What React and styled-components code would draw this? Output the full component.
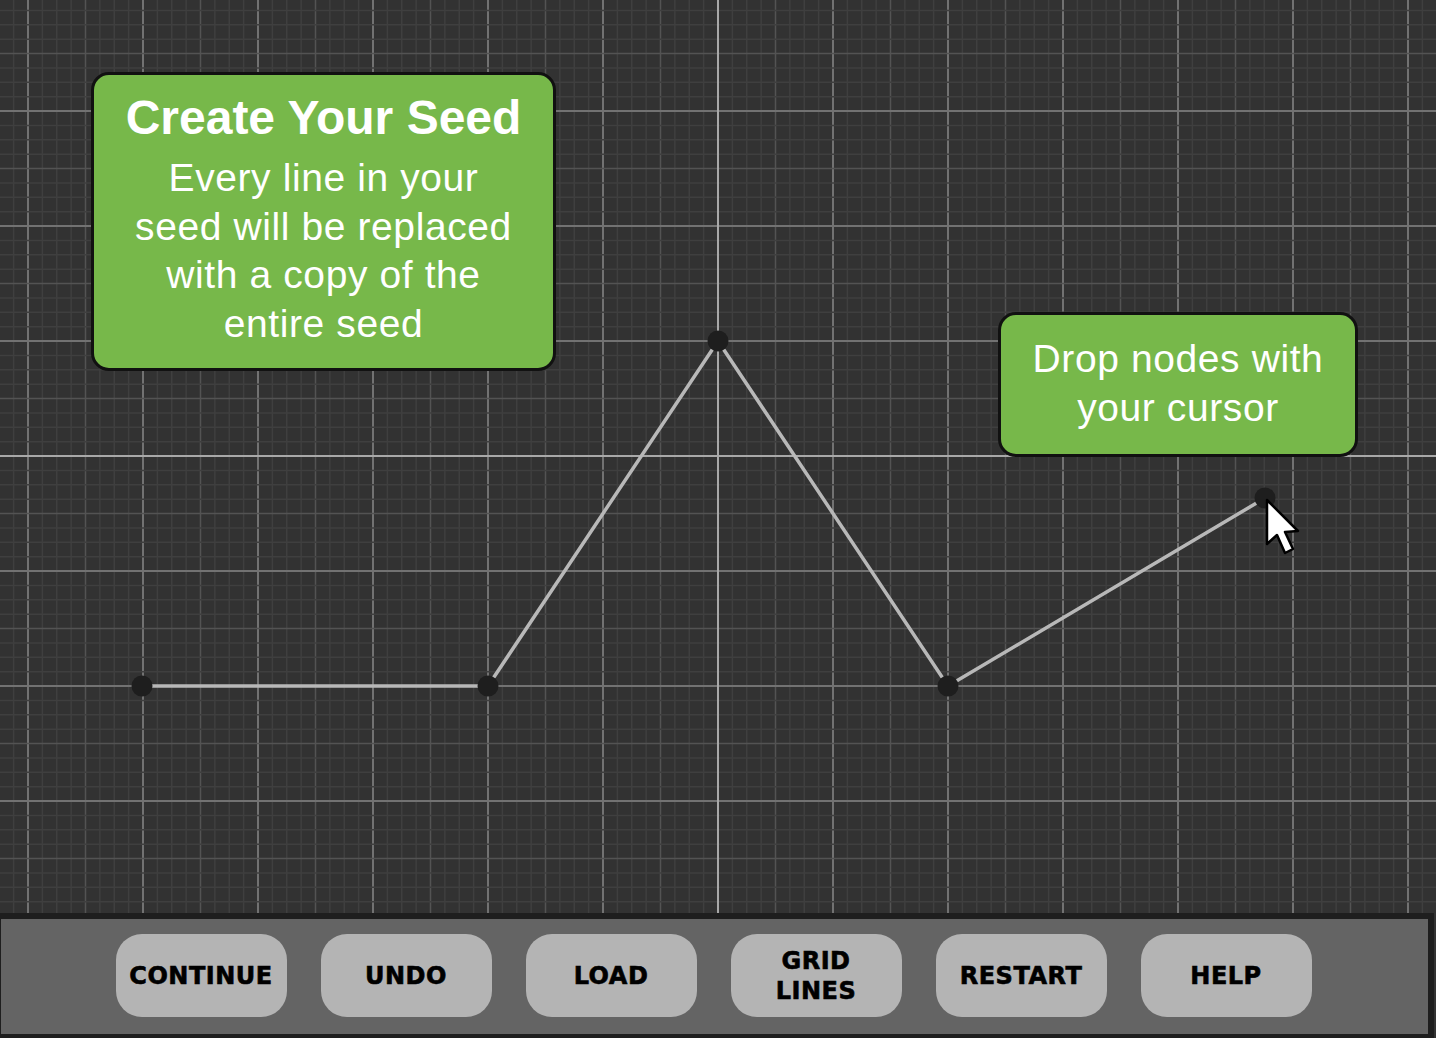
import React from "react";
import styled, { createGlobalStyle } from "styled-components";

const GlobalStyle = createGlobalStyle`
  html, body {
    margin: 0;
    padding: 0;
    background: #333333;
  }
`;

const STEP = 14.375;
const WIDTH = 1436;
const HEIGHT = 913;
const AXIS_X = 718;
const AXIS_Y = 456;

const nodes = [
  [142, 686],
  [488, 686],
  [718, 341],
  [948, 686],
  [1265, 498],
];

const buttons = ["CONTINUE", "UNDO", "LOAD", "GRID LINES", "RESTART", "HELP"];

const lineStyle = (i) => {
  if (i % 8 === 0) return { stroke: "#727272", width: 2 };
  if (i % 4 === 0) return { stroke: "#535353", width: 1.5 };
  return { stroke: "#3f3f3f", width: 1.5 };
};

const Grid = () => {
  const verticals = [];
  const horizontals = [];
  for (let i = -2; 28 + i * STEP < WIDTH; i++) {
    const x = 28 + i * STEP;
    if (x === AXIS_X) continue;
    verticals.push({ x, ...lineStyle(((i % 8) + 8) % 8) });
  }
  for (let j = -8; 111 + j * STEP < HEIGHT; j++) {
    const y = 111 + j * STEP;
    if (y === AXIS_Y) continue;
    horizontals.push({ y, ...lineStyle(((j % 8) + 8) % 8) });
  }
  const order = (a, b) => a.width - b.width || a.stroke.localeCompare(b.stroke);

  return (
    <GridSvg width={WIDTH} height={HEIGHT} viewBox={`0 0 ${WIDTH} ${HEIGHT}`}>
      {[...verticals].sort(order).map((l, i) => (
        <line key={`v${i}`} x1={l.x} y1={0} x2={l.x} y2={HEIGHT} stroke={l.stroke} strokeWidth={l.width} />
      ))}
      {[...horizontals].sort(order).map((l, i) => (
        <line key={`h${i}`} x1={0} y1={l.y} x2={WIDTH} y2={l.y} stroke={l.stroke} strokeWidth={l.width} />
      ))}
      <line x1={AXIS_X} y1={0} x2={AXIS_X} y2={HEIGHT} stroke="#a8a8a8" strokeWidth={2} />
      <line x1={0} y1={AXIS_Y} x2={WIDTH} y2={AXIS_Y} stroke="#a8a8a8" strokeWidth={2} />

      <polyline
        points={nodes.map((n) => n.join(",")).join(" ")}
        fill="none"
        stroke="#b8b8b8"
        strokeWidth={3.5}
        strokeLinejoin="round"
      />
      {nodes.map(([x, y], i) => (
        <circle key={`n${i}`} cx={x} cy={y} r={10.5} fill="#1e1e1e" />
      ))}

      {/* mouse pointer */}
      <path
        d="M1267 500 L1267 544 L1277 535 L1285 553 L1293 549 L1285 532 L1298 531 Z"
        fill="#ffffff"
        stroke="#000000"
        strokeWidth={2.5}
        strokeLinejoin="round"
      />
    </GridSvg>
  );
};

const Page = () => (
  <Screen>
    <Canvas>
      <Grid />
      <Tip left={91} top={72} width={465} padding="15px 10px 20px">
        <TipTitle>Create Your Seed</TipTitle>
        <TipText>
          Every line in your
          <br />
          seed will be replaced
          <br />
          with a copy of the
          <br />
          entire seed
        </TipText>
      </Tip>
      <Tip left={998} top={312} width={360} padding="20px 10px 22px">
        <TipText>
          Drop nodes with
          <br />
          your cursor
        </TipText>
      </Tip>
    </Canvas>
    <Toolbar>
      {buttons.map((label) => (
        <ToolButton key={label}>
          {label.includes(" ") ? (
            <span>
              {label.split(" ")[0]}
              <br />
              {label.split(" ")[1]}
            </span>
          ) : (
            label
          )}
        </ToolButton>
      ))}
    </Toolbar>
  </Screen>
);

export default function App() {
  return (
    <>
      <GlobalStyle />
      <Page />
    </>
  );
}

const Screen = styled.div`
  width: 1436px;
  height: 1038px;
  display: flex;
  flex-direction: column;
  overflow: hidden;
  background: #333333;
`;

const Canvas = styled.div`
  position: relative;
  height: ${HEIGHT}px;
  flex-shrink: 0;
  overflow: hidden;
  background: #323232;
`;

const GridSvg = styled.svg`
  display: block;
`;

const Tip = styled.div`
  position: absolute;
  left: ${({ left }) => left}px;
  top: ${({ top }) => top}px;
  width: ${({ width }) => width}px;
  box-sizing: border-box;
  padding: ${({ padding }) => padding};
  background: #77b84a;
  border: 3px solid #111111;
  border-radius: 18px;
  color: #ffffff;
  text-align: center;
  font-family: "Liberation Sans", Arial, sans-serif;
`;

const TipTitle = styled.div`
  font-size: 48px;
  font-weight: 700;
  line-height: 56px;
  margin-bottom: 8px;
`;

const TipText = styled.div`
  font-size: 39px;
  line-height: 48.5px;
  letter-spacing: 0.6px;
`;

const Toolbar = styled.div`
  flex: 1;
  width: 1434px;
  box-sizing: border-box;
  display: flex;
  align-items: center;
  justify-content: center;
  gap: 34px;
  padding: 0 2px 2px 0;
  background: #646464;
  border-style: solid;
  border-color: #1e1e1e;
  border-width: 6px 6px 4px 1px;
`;

const ToolButton = styled.button`
  width: 171px;
  height: 83px;
  flex-shrink: 0;
  border: none;
  border-radius: 26px;
  background: #b4b4b4;
  color: #000000;
  font-family: "DejaVu Sans", Verdana, sans-serif;
  font-weight: 700;
  font-size: 24px;
  line-height: 30px;
  letter-spacing: 0.5px;
  -webkit-text-stroke: 0.6px #000000;
  text-align: center;
  padding: 0;
  cursor: pointer;
`;
